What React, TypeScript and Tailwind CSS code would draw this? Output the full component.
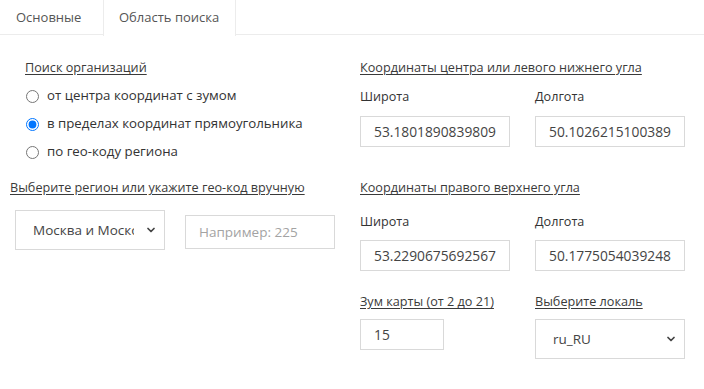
import React, { useState } from 'react';
import { ChevronDown } from 'lucide-react';

const font = { fontFamily: '"Open Sans", "DejaVu Sans", sans-serif' };

const Label: React.FC<{ children: React.ReactNode; className?: string }> = ({ children, className = '' }) => (
  <div className={`text-[12.65px] leading-[20px] text-[#3a3a3a] underline underline-offset-2 ${className}`}>{children}</div>
);

const Field: React.FC<{ value: string; className?: string }> = ({ value, className = '' }) => (
  <input
    type="text"
    defaultValue={value}
    className={`h-[31px] border border-[#d9d9d9] px-[13px] text-[13.8px] text-[#444] outline-none ${className}`}
  />
);

const Select: React.FC<{ options: string[]; className?: string }> = ({ options, className = '' }) => (
  <div className={`relative h-[40px] ${className}`}>
    <select className="h-full w-full appearance-none border border-[#d9d9d9] bg-white pl-[17px] pr-[30px] text-[13.5px] text-[#444] outline-none">
      {options.map(o => <option key={o}>{o}</option>)}
    </select>
    <ChevronDown className="pointer-events-none absolute right-[8px] top-[14px] h-[12px] w-[12px] text-[#444]" strokeWidth={3.5} />
  </div>
);

export default function App() {
  const [tab, setTab] = useState<'main' | 'area'>('area');
  const [mode, setMode] = useState('rect');

  const radios = [
    { id: 'zoom', text: 'от центра координат с зумом' },
    { id: 'rect', text: 'в пределах координат прямоугольника' },
    { id: 'geo', text: 'по гео-коду региона' },
  ];

  return (
    <div className="w-[704px] h-[389px] bg-white overflow-hidden" style={font}>
      {/* Tabs */}
      <div className="flex h-[35px] border-b border-[#ececec]">
        <button onClick={() => setTab('main')} className={`w-[103px] h-[35px] pl-[16px] text-left text-[13px] text-[#555] ${tab === 'main' ? 'bg-white border-x border-[#ececec] h-[36px]' : ''}`}>
          Основные
        </button>
        <button onClick={() => setTab('area')} className={`w-[133px] h-[36px] pl-[15px] text-left text-[13px] text-[#555] ${tab === 'area' ? 'bg-white border-x border-[#ececec]' : ''}`}>
          Область поиска
        </button>
      </div>

      <div className="flex">
        {/* Left column */}
        <div className="w-[360px] pl-[10px] pt-[22px]">
          <Label className="ml-[15px]">Поиск организаций</Label>
          <div className="mt-[9px] ml-[16px] flex flex-col gap-[8px]">
            {radios.map(r => (
              <label key={r.id} className="flex h-[20px] items-center gap-[8px] text-[13.25px] text-[#333]">
                <input type="radio" name="mode" checked={mode === r.id} onChange={() => setMode(r.id)} className="m-0 h-[13px] w-[13px]" />
                {r.text}
              </label>
            ))}
          </div>
          <Label className="mt-[15px]">Выберите регион или укажите гео-код вручную</Label>
          <div className="mt-[13px] ml-[5px] flex items-start gap-[20px]">
            <Select options={['Москва и Московская область']} className="w-[150px]" />
            <input type="text" placeholder="Например: 225" className="mt-[5px] h-[34px] w-[150px] border border-[#d9d9d9] px-[13px] text-[13.5px] text-[#444] placeholder:text-[#a3a3a3] outline-none" />
          </div>
        </div>

        {/* Right column */}
        <div className="pt-[22px]">
          <Label>Координаты центра или левого нижнего угла</Label>
          <div className="mt-[10px] flex gap-[25px]">
            <div className="w-[150px]">
              <div className="text-[12.6px] leading-[20px] text-[#333]">Широта</div>
              <Field value="53.1801890839809" className="mt-[9px] w-[150px]" />
            </div>
            <div className="w-[150px]">
              <div className="text-[12.6px] leading-[20px] text-[#333]">Долгота</div>
              <Field value="50.1026215100389" className="mt-[9px] w-[150px]" />
            </div>
          </div>

          <Label className="mt-[30px]">Координаты правого верхнего угла</Label>
          <div className="mt-[15px] flex gap-[25px]">
            <div className="w-[150px]">
              <div className="text-[12.6px] leading-[20px] text-[#333]">Широта</div>
              <Field value="53.2290675692567" className="mt-[8px] w-[150px]" />
            </div>
            <div className="w-[150px]">
              <div className="text-[12.6px] leading-[20px] text-[#333]">Долгота</div>
              <Field value="50.1775054039248" className="mt-[8px] w-[150px]" />
            </div>
          </div>

          <div className="mt-[20px] flex gap-[25px]">
            <div className="w-[150px]">
              <Label>Зум карты (от 2 до 21)</Label>
              <Field value="15" className="mt-[8px] w-[84px]" />
            </div>
            <div className="w-[150px]">
              <Label>Выберите локаль</Label>
              <Select options={['ru_RU', 'en_US']} className="mt-[8px] w-[150px]" />
            </div>
          </div>
        </div>
      </div>
    </div>
  );
}
